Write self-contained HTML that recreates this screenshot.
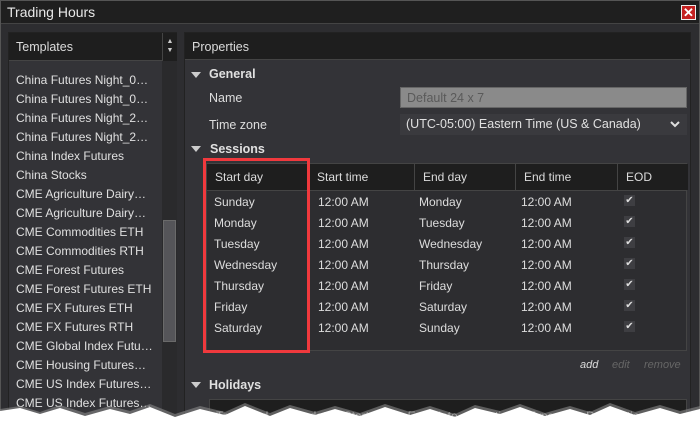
<!DOCTYPE html>
<html><head><style>
*{margin:0;padding:0;box-sizing:border-box}
body{width:700px;height:436px;overflow:hidden;background:#fff;font-family:"Liberation Sans",sans-serif;font-size:12px;color:#dcdcdc;position:relative}
.win{position:absolute;left:0;top:0;width:700px;height:436px;background:#2d2d30;border:1px solid #555}
.title{position:absolute;left:0;top:0;width:698px;height:23px;background:#1f1f1f;border-bottom:1px solid #444;font-size:14px;color:#e8e8e8;padding:3px 0 0 6px}
.close{position:absolute;left:680px;top:4px;width:15px;height:15px;background:#c42020;border:1px solid #eee;color:#fff;font-weight:bold;font-size:13px;line-height:13px;text-align:center}
.abs{position:absolute}
.lp{left:7px;top:31px;width:169px;height:400px;background:#333337;border:1px solid #222}
.hdr{background:#1e1e1e;border-bottom:1px solid #444;height:28px;padding:7px 0 0 7px;font-size:12.5px}
.li{position:absolute;left:7px;font-size:12px;color:#e0e0e0;white-space:nowrap}
.rp{left:183px;top:31px;width:507px;height:400px;background:#333337;border:1px solid #222}
.sec{position:absolute;font-weight:bold;font-size:12.5px;color:#e0e0e0}
.tri{position:absolute;width:0;height:0;border-left:5px solid transparent;border-right:5px solid transparent;border-top:6px solid #ccc}
.tb{position:absolute;left:205px;top:162px;width:481px;height:188px;border:1px solid #444;background:#2d2d30}
.th{position:absolute;top:0;height:26px;background:#1e1e1e;border-right:1px solid #444;padding:6px 0 0 8px;font-size:12px}
.cell{position:absolute;font-size:12px;color:#ddd}
.chk{position:absolute;width:11px;height:11px;background:#3e3e42;color:#ddd;font-size:10px;line-height:11px;text-align:center}
</style></head><body>
<div class="win">
<div class="title">Trading Hours</div>
<div class="close">✕</div>
<div class="abs lp">
 <div class="hdr">Templates</div>
 <div class="abs" style="left:153px;top:0;width:15px;height:28px;background:#1e1e1e;border-left:1px solid #444;color:#ccc;font-size:7px;text-align:center;line-height:9px;padding-top:4px">▲<br>▼</div>
 <div class="abs" style="left:153px;top:28px;width:15px;height:372px;background:#2a2a2c"></div>
 <div class="abs" style="left:154px;top:187px;width:13px;height:122px;background:#555559;border:1px solid #6a6a6a"></div>
 <div class="li" style="top:40px">China Futures Night_0…</div>
 <div class="li" style="top:59px">China Futures Night_0…</div>
 <div class="li" style="top:78px">China Futures Night_2…</div>
 <div class="li" style="top:97px">China Futures Night_2…</div>
 <div class="li" style="top:116px">China Index Futures</div>
 <div class="li" style="top:135px">China Stocks</div>
 <div class="li" style="top:154px">CME Agriculture Dairy…</div>
 <div class="li" style="top:173px">CME Agriculture Dairy…</div>
 <div class="li" style="top:192px">CME Commodities ETH</div>
 <div class="li" style="top:211px">CME Commodities RTH</div>
 <div class="li" style="top:230px">CME Forest Futures</div>
 <div class="li" style="top:249px">CME Forest Futures ETH</div>
 <div class="li" style="top:268px">CME FX Futures ETH</div>
 <div class="li" style="top:287px">CME FX Futures RTH</div>
 <div class="li" style="top:306px">CME Global Index Futu…</div>
 <div class="li" style="top:325px">CME Housing Futures…</div>
 <div class="li" style="top:344px">CME US Index Futures…</div>
 <div class="li" style="top:363px">CME US Index Futures…</div>
</div>
<div class="abs rp">
 <div class="hdr" style="height:27px">Properties</div>
</div>
<div class="tri" style="left:190px;top:71px"></div>
<div class="sec" style="left:208px;top:66px">General</div>
<div class="cell" style="left:208px;top:90px;font-size:12.5px">Name</div>
<div class="abs" style="left:399px;top:86px;width:287px;height:21px;background:#8a8a8a;border:1px solid #666;color:#5a5a5a;padding:3px 0 0 6px;font-size:12.5px">Default 24 x 7</div>
<div class="cell" style="left:208px;top:117px;font-size:12.5px">Time zone</div>
<div class="abs" style="left:399px;top:113px;width:287px;height:21px;background:#3a3a3e;color:#e0e0e0;padding:3px 0 0 6px;font-size:12.5px">(UTC-05:00) Eastern Time (US &amp; Canada)<svg style="position:absolute;right:7px;top:7px" width="10" height="7"><path d="M1 1 L5 5 L9 1" stroke="#ddd" stroke-width="2" fill="none"/></svg></div>
<div class="tri" style="left:190px;top:145px"></div>
<div class="sec" style="left:209px;top:141px">Sessions</div>
<div class="tb">
 <div class="th" style="left:0;width:102px">Start day</div>
 <div class="th" style="left:102px;width:106px">Start time</div>
 <div class="th" style="left:208px;width:101px">End day</div>
 <div class="th" style="left:309px;width:102px">End time</div>
 <div class="th" style="left:411px;width:70px;border-right:none">EOD</div>
 <div class="abs" style="left:0;top:26px;width:479px;height:1px;background:#444"></div>
</div>
<div class="cell" style="left:213px;top:194px">Sunday</div><div class="cell" style="left:317px;top:194px">12:00 AM</div><div class="cell" style="left:418px;top:194px">Monday</div><div class="cell" style="left:520px;top:194px">12:00 AM</div><div class="chk" style="left:623px;top:194px">✔</div>
<div class="cell" style="left:213px;top:215px">Monday</div><div class="cell" style="left:317px;top:215px">12:00 AM</div><div class="cell" style="left:418px;top:215px">Tuesday</div><div class="cell" style="left:520px;top:215px">12:00 AM</div><div class="chk" style="left:623px;top:215px">✔</div>
<div class="cell" style="left:213px;top:236px">Tuesday</div><div class="cell" style="left:317px;top:236px">12:00 AM</div><div class="cell" style="left:418px;top:236px">Wednesday</div><div class="cell" style="left:520px;top:236px">12:00 AM</div><div class="chk" style="left:623px;top:236px">✔</div>
<div class="cell" style="left:213px;top:257px">Wednesday</div><div class="cell" style="left:317px;top:257px">12:00 AM</div><div class="cell" style="left:418px;top:257px">Thursday</div><div class="cell" style="left:520px;top:257px">12:00 AM</div><div class="chk" style="left:623px;top:257px">✔</div>
<div class="cell" style="left:213px;top:278px">Thursday</div><div class="cell" style="left:317px;top:278px">12:00 AM</div><div class="cell" style="left:418px;top:278px">Friday</div><div class="cell" style="left:520px;top:278px">12:00 AM</div><div class="chk" style="left:623px;top:278px">✔</div>
<div class="cell" style="left:213px;top:299px">Friday</div><div class="cell" style="left:317px;top:299px">12:00 AM</div><div class="cell" style="left:418px;top:299px">Saturday</div><div class="cell" style="left:520px;top:299px">12:00 AM</div><div class="chk" style="left:623px;top:299px">✔</div>
<div class="cell" style="left:213px;top:320px">Saturday</div><div class="cell" style="left:317px;top:320px">12:00 AM</div><div class="cell" style="left:418px;top:320px">Sunday</div><div class="cell" style="left:520px;top:320px">12:00 AM</div><div class="chk" style="left:623px;top:320px">✔</div>
<div class="abs" style="left:202px;top:157px;width:107px;height:195px;border:3px solid #f0393d"></div>
<div class="abs" style="left:579px;top:358px;font-style:italic;font-size:11px;color:#ddd">add</div>
<div class="abs" style="left:611px;top:358px;font-style:italic;font-size:11px;color:#666">edit</div>
<div class="abs" style="left:643px;top:358px;font-style:italic;font-size:11px;color:#666">remove</div>
<div class="tri" style="left:190px;top:381px"></div>
<div class="sec" style="left:208px;top:377px">Holidays</div>
<div class="abs" style="left:208px;top:398px;width:478px;height:30px;background:#1e1e1e;border:1px solid #444;font-size:12px;white-space:nowrap;overflow:hidden;padding:9px 0 0 6px;word-spacing:2px">Trading d&nbsp; Start date&nbsp; Start time&nbsp; End date&nbsp; End time&nbsp; Type&nbsp;&nbsp;&nbsp;&nbsp;&nbsp; Description</div>
</div>
<svg class="abs" style="left:0;top:0" width="700" height="436">
<polygon fill="#888" opacity="0.6" points="0,409 20,406 40,412 60,405 85,413 110,406 130,411 150,404 175,414 200,406 225,412 245,403 270,413 290,405 315,412 335,406 360,413 385,404 410,412 430,406 455,414 475,405 500,411 520,404 545,413 570,406 590,412 610,403 635,412 660,405 680,411 700,406 700,436 0,436"/>
<polygon fill="#fff" points="0,411 20,408 40,414 60,408 85,416 110,409 130,414 150,407 175,417 200,409 225,415 245,406 270,416 290,408 315,415 335,409 360,416 385,407 410,415 430,409 455,417 475,408 500,414 520,407 545,416 570,409 590,415 610,406 635,415 660,408 680,414 700,409 700,436 0,436"/></svg>
</body></html>
